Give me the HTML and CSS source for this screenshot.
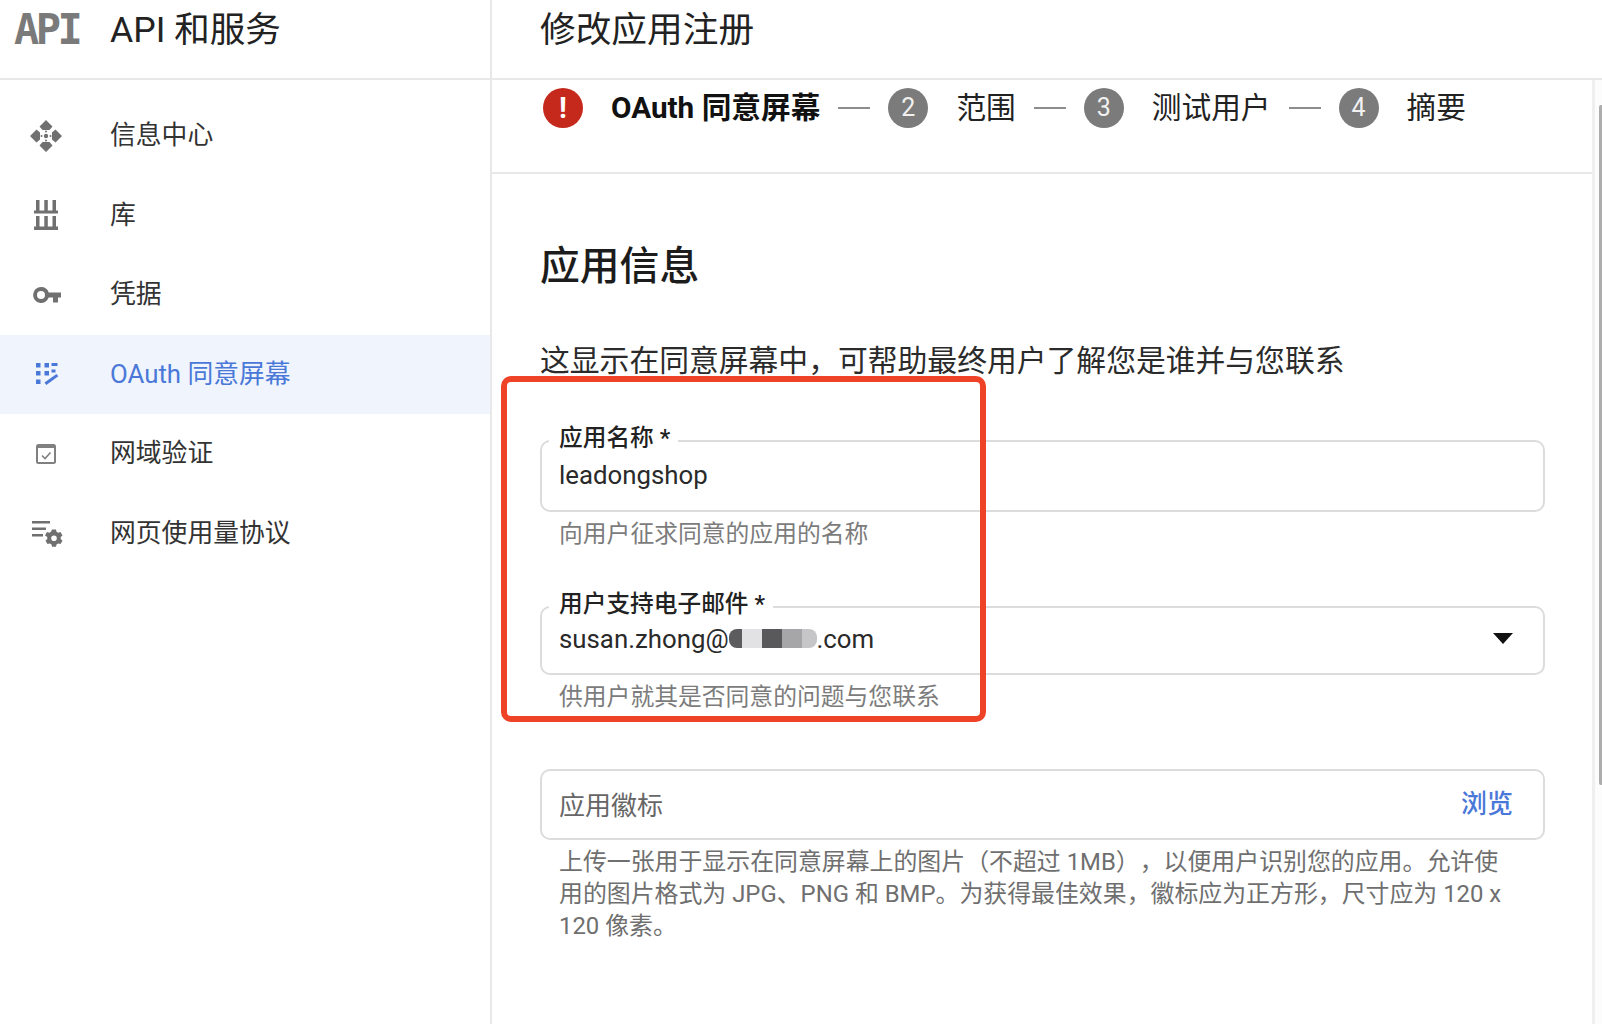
FILE: index.html
```html
<!DOCTYPE html>
<html lang="zh-CN">
<head>
<meta charset="utf-8">
<title>修改应用注册</title>
<link rel="stylesheet" href="styles.css">
</head>
<body>
<div class="app">
  <header class="topbar">
    <div class="brand">
      <span class="brand-logo">API</span>
      <span class="brand-name">API 和服务</span>
    </div>
    <h1 class="page-title">修改应用注册</h1>
  </header>
  <div class="workspace">
    <nav class="sidebar">
      <a class="nav-item">
        <svg class="nav-icon" viewBox="0 0 30 30"><path class="fill" d="M15 -1l6.500 6.500-3 3.500h-7l-3-3.500zM15 31l-6.500-6.500 3-3.500h7l3 3.500zM-1 15l6.500-6.500 3.500 3v7l-3.500 3zM31 15l-6.500 6.500-3.500-3v-7l3.500-3z"/><circle class="fill" cx="15" cy="15" r="2.200"/><circle class="fill" cx="15" cy="10.500" r="1"/><circle class="fill" cx="15" cy="19.500" r="1"/><circle class="fill" cx="10.500" cy="15" r="1"/><circle class="fill" cx="19.500" cy="15" r="1"/></svg>
        <span class="nav-text">信息中心</span>
      </a>
      <a class="nav-item">
        <svg class="nav-icon" viewBox="0 0 30 30"><path class="fill" d="M5 0h3.500v11H5zM13.300 0h3.500v11h-3.500zM21.500 0h3.500v11h-3.500zM3 10.500h24v3H3zM5 16h3.500v11H5zM13.300 16h3.500v11h-3.500zM21.500 16h3.500v11h-3.500zM3 26.500h24V30H3z"/></svg>
        <span class="nav-text">库</span>
      </a>
      <a class="nav-item">
        <svg class="nav-icon" viewBox="0 0 30 30"><path class="fill" fill-rule="evenodd" d="M10 7a8 8 0 0 1 7.700 5.500H30v5h-3v5h-5v-5h-4.300A8 8 0 1 1 10 7zm0 4a4 4 0 1 0 0 8 4 4 0 0 0 0-8z"/></svg>
        <span class="nav-text">凭据</span>
      </a>
      <a class="nav-item nav-item-active">
        <svg class="nav-icon" viewBox="0 0 30 30"><path class="fill" d="M5 4h4.500v4.500H5zM13.500 4H18v4.500h-4.500zM20.500 4h6v3h-6zM5 12h4.500v4.500H5zM13.500 12H18v4.500h-4.500zM5 20.500h4.500V25H5zM13.500 23.500l12-8.500 1.800 2.300-12 8.700zM20.500 10.500h4v3h-4z"/></svg>
        <span class="nav-text">OAuth 同意屏幕</span>
      </a>
      <a class="nav-item">
        <svg class="nav-icon" viewBox="0 0 30 30"><path class="fill fill-soft" fill-rule="evenodd" d="M7.500 5h15A2.500 2.500 0 0 1 25 7.500v15a2.500 2.500 0 0 1-2.500 2.500h-15A2.500 2.500 0 0 1 5 22.500v-15A2.500 2.500 0 0 1 7.500 5zM7 9v14h16V9z"/><path class="line" d="M11 16.500l3 3 5.500-6"/></svg>
        <span class="nav-text">网域验证</span>
      </a>
      <a class="nav-item">
        <svg class="nav-icon" viewBox="0 0 30 30"><path class="fill" d="M1 3h18v2.500H1zM1 9.500h14V12H1zM1 16h11v2.500H1z"/><path class="fill" fill-rule="evenodd" d="M21 11.500h4l.5 2.300 1.700 1 2.300-.7 2 3.400-1.800 1.600v2l1.800 1.600-2 3.400-2.300-.7-1.700 1-.5 2.300h-4l-.5-2.300-1.700-1-2.300.7-2-3.400 1.800-1.600v-2L14 17.500l2-3.400 2.300.7 1.700-1zm2 6a2.800 2.800 0 1 0 0 5.600 2.800 2.800 0 0 0 0-5.600z"/></svg>
        <span class="nav-text">网页使用量协议</span>
      </a>
    </nav>
    <main class="main">
      <div class="main-scroll">
        <ol class="stepper">
          <li class="step step-current">
            <span class="step-badge step-badge-error">!</span>
            <span>OAuth 同意屏幕</span>
          </li>
          <li class="step-sep"></li>
          <li class="step">
            <span class="step-badge">2</span>
            <span>范围</span>
          </li>
          <li class="step-sep"></li>
          <li class="step">
            <span class="step-badge">3</span>
            <span>测试用户</span>
          </li>
          <li class="step-sep"></li>
          <li class="step">
            <span class="step-badge">4</span>
            <span>摘要</span>
          </li>
        </ol>
        <section class="form">
          <h2 class="section-title">应用信息</h2>
          <p class="section-desc">这显示在同意屏幕中，可帮助最终用户了解您是谁并与您联系</p>
          <div class="field field-name">
            <label class="field-label">应用名称 *</label>
            <span class="field-value">leadongshop</span>
          </div>
          <p class="helper">向用户征求同意的应用的名称</p>
          <div class="field field-email">
            <label class="field-label">用户支持电子邮件 *</label>
            <span class="field-value">susan.zhong@<span class="redact"><i class="r1"></i><i class="r2"></i><i class="r3"></i><i class="r4"></i><i class="r5"></i></span>.com</span>
            <span class="select-arrow"></span>
          </div>
          <p class="helper">供用户就其是否同意的问题与您联系</p>
          <div class="field field-logo">
            <span class="field-placeholder">应用徽标</span>
            <a class="browse">浏览</a>
          </div>
          <p class="helper helper-logo">上传一张用于显示在同意屏幕上的图片（不超过 1MB），以便用户识别您的应用。允许使<br>用的图片格式为 JPG、PNG 和 BMP。为获得最佳效果，徽标应为正方形，尺寸应为 120 x<br>120 像素。</p>
          <div class="annotation"></div>
        </section>
      </div>
      <div class="scrollbar"><div class="scrollbar-thumb"></div></div>
    </main>
  </div>
</div>
</body>
</html>
```
FILE: styles.css
```css
* { box-sizing: border-box; }
html, body { margin: 0; padding: 0; height: 100%; overflow: hidden; background: #fff; }
body { font-family: Roboto, "Noto Sans CJK SC", sans-serif; color: #2b2b2b; text-spacing-trim: space-all; }
p, h1, h2, ol { margin: 0; padding: 0; }
ol { list-style: none; }
.app { display: flex; flex-direction: column; height: 1024px; }

.topbar { display: flex; height: 80px; flex: none; border-bottom: 2px solid #e8e8e8; }
.brand { width: 492px; flex: none; display: flex; align-items: center; border-right: 2px solid #e8e8e8; padding-left: 14px; padding-bottom: 18px; }
.brand-logo { width: 96px; font-family: "DejaVu Sans Mono", monospace; font-weight: 700; font-size: 42px; letter-spacing: -3.500px; color: #7a7a7a; line-height: 40px; }
.brand-name { font-size: 35.600px; color: #222; line-height: 40px; }
.page-title { font-weight: 400; font-size: 35.700px; line-height: 40px; color: #222; padding: 10px 0 0 48px; }

.workspace { display: flex; flex: 1; min-height: 0; }
.sidebar { width: 492px; flex: none; border-right: 2px solid #e8e8e8; padding-top: 16px; }
.nav-item { display: flex; align-items: center; height: 79.500px; padding-left: 31px; gap: 49px; font-size: 25.800px; color: #333; }
.nav-text { padding-bottom: 6px; }
.nav-item-active { background: #eff4fd; color: #4a78d8; }
.nav-icon { width: 30px; height: 30px; flex: none; overflow: visible; }
.fill { fill: #707070; }
.fill-soft { fill: #808080; }
.line { fill: none; stroke: #808080; stroke-width: 1.600; }
.nav-item-active .fill { fill: #4a78d8; }

.main { flex: 1; display: flex; min-width: 0; }
.main-scroll { flex: 1; min-width: 0; }
.stepper { display: flex; align-items: center; height: 94px; padding: 0 0 36px 51px; border-bottom: 2px solid #e8e8e8; font-size: 29.700px; line-height: 40px; color: #222; }
.step { display: flex; align-items: center; gap: 28px; }
.step-current { font-weight: 700; color: #111; }
.step-badge { width: 40px; height: 40px; border-radius: 50%; background: #7b7b7b; color: #f1f1f1; display: flex; align-items: center; justify-content: center; font-size: 25px; font-weight: 400; }
.step-badge-error { background: #c5291c; color: #fff; font-weight: 700; font-size: 29px; }
.step-sep { width: 32px; height: 2px; background: #8d8d8d; margin: 0 18px; }

.form { position: relative; padding: 68px 48px 0 48px; }
.section-title { font-size: 39.800px; font-weight: 500; line-height: 50px; color: #1c1c1c; }
.section-desc { font-size: 29.800px; line-height: 40px; margin-top: 49px; color: #2b2b2b; white-space: nowrap; }
.field { position: relative; display: flex; align-items: center; justify-content: space-between; width: 1005px; border: 2px solid #dcdcdc; border-radius: 10px; padding: 0 30px 0 17px; font-size: 26px; }
.field-name { height: 72px; margin-top: 59px; }
.field-email { height: 69px; margin-top: 56px; }
.field-logo { height: 71px; margin-top: 56px; }
.field-label { position: absolute; left: 7px; top: -19px; padding: 0 8px 0 10px; background: #fff; font-size: 23.700px; font-weight: 500; line-height: 30px; color: #222; white-space: nowrap; }
.field-value { font-size: 25.800px; color: #2a2a2a; line-height: 36px; display: inline-flex; align-items: center; margin-bottom: 2px; }
.field-email .field-value { margin-bottom: 4px; }
.redact { display: inline-flex; height: 19px; }
.redact i { display: block; }
.r1 { width: 13px; background: #5c5c5e; border-radius: 8px 0 0 8px; }
.r2 { width: 20px; background: #e2e2e4; }
.r3 { width: 20px; background: #59595b; }
.r4 { width: 20px; background: #a6a6a9; }
.r5 { width: 15px; background: #c6c6c9; border-radius: 0 8px 8px 0; }
.select-arrow { width: 0; height: 0; border-left: 10px solid transparent; border-right: 10px solid transparent; border-top: 11px solid #111; margin: 0 0 4px 0; }
.field-placeholder { font-size: 26px; color: #666; margin-bottom: 3px; }
.browse { font-size: 26px; font-weight: 500; color: #4a78d8; margin-bottom: 6px; }
.helper { font-size: 23.800px; line-height: 32px; color: #7c7c7c; padding-left: 19px; margin-top: 6px; white-space: nowrap; }
.helper-logo { color: #6f6f6f; font-size: 23.900px; }

.annotation { position: absolute; left: 9px; top: 202px; width: 485px; height: 346px; border: 6px solid #ee4326; border-radius: 10px; pointer-events: none; }

.scrollbar { position: relative; width: 10px; flex: none; background: #fcfcfc; border-left: 3px solid #efefef; }
.scrollbar-thumb { position: absolute; right: 0; top: 25px; width: 3px; height: 680px; background: #adadad; border-radius: 2px 0 0 2px; }
```
